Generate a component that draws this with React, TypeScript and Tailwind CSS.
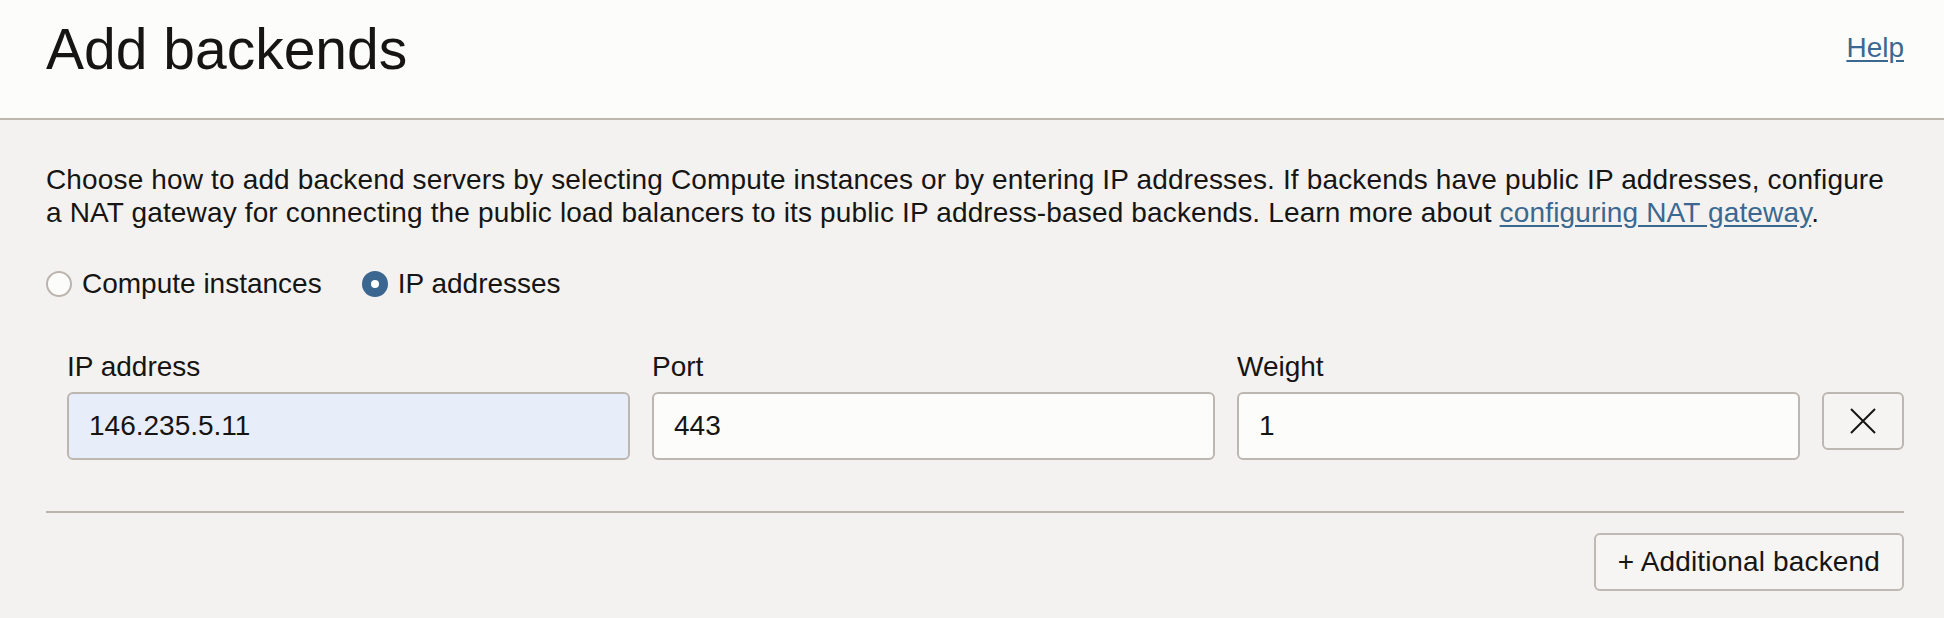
import { useState } from "react";

type Field = { label: string; value: string; autofill?: boolean };

function Radio({ checked, label, onClick }: { checked: boolean; label: string; onClick: () => void }) {
  return (
    <button type="button" onClick={onClick} className="flex items-center gap-[10px] leading-[34px]">
      {checked ? (
        <span className="w-[26px] h-[26px] rounded-full bg-[#3a6690] flex items-center justify-center">
          <span className="w-[8px] h-[8px] rounded-full bg-white" />
        </span>
      ) : (
        <span className="w-[26px] h-[26px] rounded-full border-2 border-[#bab5af] bg-[#fcfcfb]" />
      )}
      <span>{label}</span>
    </button>
  );
}

export default function App() {
  const [mode, setMode] = useState<"compute" | "ip">("ip");
  const fields: Field[] = [
    { label: "IP address", value: "146.235.5.11", autofill: true },
    { label: "Port", value: "443" },
    { label: "Weight", value: "1" },
  ];

  return (
    <div className="w-[1944px] h-[618px] overflow-hidden bg-[#f3f2f0] text-[#161513] text-[28px] font-['Liberation_Sans',Arial,sans-serif]">
      <header className="h-[120px] bg-[#fcfcfb] border-b-2 border-[#bcb6af] pr-[40px] pl-[46px] pt-[13px] flex justify-between items-start">
        <h1 className="text-[57px] leading-[72px] font-normal">Add backends</h1>
        <a href="#" className="mt-[18px] leading-[34px] text-[#3a6891] underline underline-offset-[3px]">
          Help
        </a>
      </header>

      <main className="pl-[46px] pr-[40px] pt-[43px] flex flex-col">
        <p className="leading-[33px] tracking-[0.15px]">
          Choose how to add backend servers by selecting Compute instances or by entering IP addresses. If backends have
          public IP addresses, configure
          <br />
          a NAT gateway for connecting the public load balancers to its public IP address-based backends. Learn more
          about{" "}
          <a href="#" className="text-[#3a6891] underline underline-offset-[3px]">
            configuring NAT gateway
          </a>
          .
        </p>

        <div className="mt-[38px] flex items-center gap-[40px]">
          <Radio checked={mode === "compute"} label="Compute instances" onClick={() => setMode("compute")} />
          <Radio checked={mode === "ip"} label="IP addresses" onClick={() => setMode("ip")} />
        </div>

        <div className="mt-[49px] pl-[21px] grid grid-cols-[563px_563px_563px_82px] gap-x-[22px] items-end">
          {fields.map((f) => (
            <label key={f.label} className="flex flex-col gap-[8px]">
              <span className="leading-[34px]">{f.label}</span>
              <input
                defaultValue={f.value}
                className={`h-[68px] rounded-[6px] border-2 border-[#bdb7b1] px-[20px] leading-[34px] outline-none ${
                  f.autofill ? "bg-[#e8eef9]" : "bg-[#fcfcfb]"
                }`}
              />
            </label>
          ))}
          <button
            type="button"
            aria-label="Remove backend"
            className="self-start mt-[42px] h-[58px] rounded-[6px] border-2 border-[#bdb7b1] bg-[#f5f4f2] flex items-center justify-center"
          >
            <svg width="26" height="26" viewBox="0 0 26 26" fill="none" stroke="#161513" strokeWidth="2">
              <path d="M1 1L25 25M25 1L1 25" />
            </svg>
          </button>
        </div>

        <div className="mt-[51px] h-[2px] bg-[#bcb5ae]" />

        <div className="mt-[20px] flex justify-end">
          <button
            type="button"
            className="h-[58px] px-[22px] rounded-[6px] border-2 border-[#bfb9b3] bg-[#f6f5f3] leading-[34px] tracking-[0.15px]"
          >
            + Additional backend
          </button>
        </div>
      </main>
    </div>
  );
}
